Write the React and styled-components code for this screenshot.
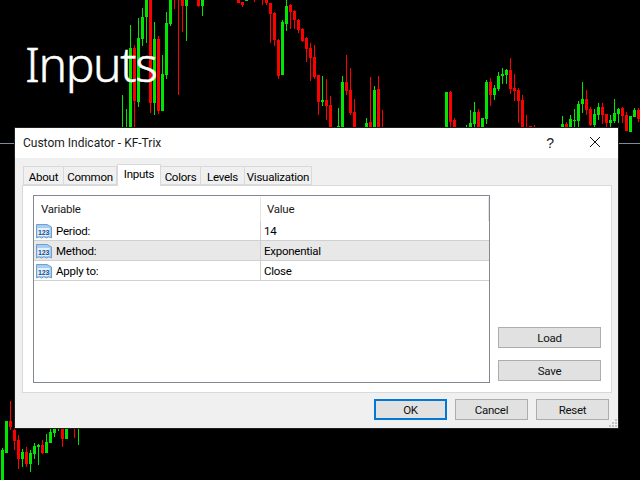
import React from "react";
import styled, { createGlobalStyle } from "styled-components";

const Global = createGlobalStyle`
  html, body { margin: 0; padding: 0; background: #000; }
  #root { width: 640px; height: 480px; }
`;

const G = "#00e600";
const R = "#ff0000";
// candles in tripled pixels: [x, wickTop, wickBottom, bodyTop, bodyBottom, colour]; no body when bodyTop is null
const top = [
  [367,285,382,null,null,G],[379,328,382,null,null,G],[391,75,382,145,382,G],[403,135,382,145,305,R],
  [415,55,322,115,308,G],[427,25,137,52,118,G],[439,0,130,0,50,G],[451,0,338,0,308,R],[463,67,345,118,310,G],
  [475,108,342,118,335,R],[487,165,333,222,333,G],[499,37,237,70,225,G],[511,0,78,0,72,G],[523,0,27,null,null,R],
  [535,0,285,null,null,R],[547,0,97,0,18,R],[559,0,122,0,18,G],[595,0,20,0,18,R],[607,0,48,0,18,G],
  [715,0,10,0,10,R],[727,5,20,5,14,R],[739,0,3,0,3,G],[763,0,6,null,null,R],[787,0,14,null,null,R],[799,0,14,0,10,R],
  [811,8,130,8,42,R],[823,35,137,38,120,R],[835,118,237,120,228,R],[847,60,225,67,225,G],[859,0,93,18,72,G],
  [871,12,87,15,35,R],[883,30,88,32,60,R],[895,58,100,60,90,R],[907,85,125,87,122,R],[919,112,185,115,147,R],
  [931,130,242,143,173,R],[943,135,237,170,230,R],[955,225,345,225,305,R],
  [967,228,318,300,306,G],[979,237,360,300,318,R],[991,288,382,315,382,R],[1015,323,382,378,382,G],
  [1027,228,382,246,382,G],[1039,165,285,246,273,R],[1051,205,345,270,338,R],[1063,297,382,336,382,R],
  [1099,354,382,369,382,G],[1111,231,382,366,382,R],[1123,258,382,270,382,G],[1135,228,382,267,382,R],[1147,330,382,null,null,R],
  [1339,276,382,276,382,G],[1351,273,382,276,366,R],[1363,354,382,360,382,R],[1399,375,382,null,null,G],
  [1411,330,382,369,382,G],[1423,306,382,336,372,G],[1435,327,382,336,382,R],[1447,354,382,354,382,G],
  [1459,240,372,246,357,G],[1471,234,318,246,285,R],[1483,255,300,264,285,G],[1495,216,273,228,267,G],
  [1507,204,252,222,228,G],[1519,207,252,210,225,G],[1531,174,282,210,267,R],[1543,222,303,264,273,R],
  [1555,264,370,270,303,R],[1567,285,382,300,382,R],[1579,345,382,null,null,R],[1591,378,382,378,382,R],[1603,375,382,null,null,R],
  [1687,348,382,372,382,G],[1699,366,382,372,382,R],[1711,345,382,357,382,G],[1723,327,382,360,363,G],
  [1735,303,382,312,363,G],[1747,246,340,297,312,G],[1759,270,345,297,330,R],[1771,321,378,327,375,R],
  [1783,327,382,342,375,G],[1795,309,360,321,345,G],[1807,309,372,321,345,R],[1819,342,382,342,369,R],
  [1831,345,382,360,369,G],[1843,297,369,339,363,G],[1855,324,369,327,342,G],[1867,321,369,324,348,R],
  [1879,336,393,345,393,R],[1891,348,396,348,396,G],[1903,324,351,330,351,G],[1915,324,366,330,357,R],
];
const low = [
  [7,234,330,240,330,G],[19,153,248,153,248,G],[31,93,180,153,170,R],[43,168,240,180,213,R],[55,195,297,210,267,R],
  [67,237,291,246,267,G],[79,231,291,246,282,R],[91,240,306,249,282,G],[103,219,267,228,252,G],[115,222,285,225,231,G],
  [127,210,252,225,249,R],[139,192,249,216,249,G],[151,176,219,186,219,G],[163,176,201,176,189,G],[175,176,183,null,null,G],
  [187,176,231,176,207,R],[199,176,207,176,207,G],[223,176,204,null,null,R],[235,176,225,null,null,G],
];

const Screen = styled.div`
  position: relative;
  width: 640px;
  height: 480px;
  overflow: hidden;
  background: #000;
  font-family: "Roboto", "Liberation Sans", sans-serif;
`;
const Chart = styled.svg`
  position: absolute;
  inset: 0;
`;
const Caption = styled.div`
  position: absolute;
  left: 25px;
  top: 32px;
  color: #fff;
  font: 300 48px/64px "Noto Sans", sans-serif;
  letter-spacing: -1.4px;
  -webkit-text-stroke: 0.5px #fff;
`;
const Dialog = styled.div`
  position: absolute;
  left: 14px;
  top: 127px;
  width: 603px;
  height: 300px;
  display: flex;
  flex-direction: column;
  background: #f0f0f0;
  border: 1px solid #1f1f1f;
  color: #000;
  font-size: 11.5px;
  letter-spacing: -0.25px;
`;
const TitleBar = styled.div`
  height: 30px;
  flex: none;
  display: flex;
  align-items: center;
  background: #fff;
  padding: 0 0 0 8px;
`;
const Title = styled.div`
  flex: 1;
  font-size: 12px;
  letter-spacing: 0;
  color: #1a1a1a;
`;
const HelpMark = styled.div`
  width: 46px;
  text-align: center;
  margin-right: -1px;
  font: 14px/29px "Liberation Sans", sans-serif;
  color: #222;
`;
const CloseMark = styled.svg`
  width: 46px;
  height: 30px;
  flex: none;
`;
const Body = styled.div`
  flex: 1;
  min-height: 0;
  padding: 8px 6px 0 7px;
  display: flex;
  flex-direction: column;
`;
const TabStrip = styled.div`
  display: flex;
  align-items: flex-end;
  height: 19px;
  padding-left: 1px;
  position: relative;
  z-index: 1;
`;
const Tab = styled.div`
  width: ${(p) => p.$w}px;
  box-sizing: border-box;
  height: ${(p) => (p.$active ? 22 : 19)}px;
  margin-bottom: ${(p) => (p.$active ? -1 : 0)}px;
  border: 1px solid #d9d9d9;
  border-left-width: ${(p) => (p.$active || p.$first ? 1 : 0)}px;
  border-bottom: ${(p) => (p.$active ? "none" : "1px solid #d9d9d9")};
  background: ${(p) => (p.$active ? "#fff" : "#f0f0f0")};
  text-align: center;
  line-height: ${(p) => (p.$active ? 19 : 20)}px;
  white-space: nowrap;
`;
const Panel = styled.div`
  box-sizing: border-box;
  height: 208px;
  border: 1px solid #d9d9d9;
  background: #fff;
  padding: 9px 10px 9px 10px;
  display: flex;
  gap: 8px;
`;
const Table = styled.div`
  box-sizing: border-box;
  width: 457px;
  height: 188px;
  border: 1px solid #828790;
  flex: none;
`;
const HeaderRow = styled.div`
  display: flex;
  height: 25px;
  color: #1a1a1a;
`;
const HeaderCell = styled.div`
  box-sizing: border-box;
  width: ${(p) => p.$w}px;
  height: 24px;
  margin-top: 1px;
  line-height: 25px;
  padding-left: ${(p) => p.$pad}px;
  border-right: 1px solid #e5e5e5;
`;
const Row = styled.div`
  display: flex;
  box-sizing: border-box;
  height: 20px;
  width: 455px;
  border-bottom: 1px solid #d0d0d0;
  background: ${(p) => (p.$selected ? "#e8e8e8" : "#fff")};
  line-height: 20px;
`;
const NameCell = styled.div`
  box-sizing: border-box;
  width: 227px;
  display: flex;
  align-items: center;
  gap: 4px;
  padding-left: 2px;
  border-right: 1px solid #d0d0d0;
`;
const ValueCell = styled.div`
  padding-left: 3px;
`;
const SideButtons = styled.div`
  display: flex;
  flex-direction: column;
  justify-content: flex-end;
  gap: 12px;
  padding-bottom: 2px;
`;
const Button = styled.div`
  box-sizing: border-box;
  width: ${(p) => p.$w || 73}px;
  height: 21px;
  background: #e1e1e1;
  border: ${(p) => (p.$primary ? "2px solid #0078d7" : "1px solid #adadad")};
  text-align: center;
  line-height: ${(p) => (p.$primary ? 19 : 21)}px;
  color: #111;
`;
const Footer = styled.div`
  flex: 1;
  display: flex;
  justify-content: flex-end;
  gap: 8px;
  padding: 6px 3px 0 0;
`;
const Grip = styled.svg`
  position: absolute;
  right: 0;
  bottom: 0;
`;
const IconDigits = styled.text`
  font: 700 7px "Liberation Sans", sans-serif;
  letter-spacing: -0.2px;
  fill: #174f8c;
`;

function Candles({ data, dx = 0, dy = 0 }) {
  return data.map(([x, wt, wb, bt, bb, c], i) => {
    const cx = Math.floor(x / 3) + dx;
    const yt = Math.round(wt / 3) + dy;
    const yb = Math.round(wb / 3) + dy;
    return (
      <g key={i} fill={c}>
        <rect x={cx} y={yt} width="1" height={yb - yt} />
        {bt !== null && (
          <rect x={cx - 1} y={Math.round(bt / 3) + dy} width="3" height={Math.max(1, Math.round((bb - bt) / 3))} />
        )}
      </g>
    );
  });
}

const NumIcon = () => (
  <svg width="16" height="16" viewBox="0 0 16 16">
    <path d="M0.5 1.5H11L15.5 4V15L13 13.8L10.5 15L8 13.8L5.5 15L3 13.8L0.5 15Z" fill="#a9cdee" stroke="#6f9fce" />
    <rect x="1.5" y="5" width="12" height="8" fill="#e4f0fb" />
    <IconDigits x="2" y="11.5">123</IconDigits>
  </svg>
);

const rows = [
  ["Period:", "14"],
  ["Method:", "Exponential", true],
  ["Apply to:", "Close"],
];
const tabs = [["About", 41], ["Common", 53], ["Inputs", 44], ["Colors", 40], ["Levels", 44], ["Visualization", 67]];

export default function App() {
  return (
    <Screen>
      <Global />
      <Chart width="640" height="480" viewBox="0 0 640 480">
        <rect x="0" y="143" width="640" height="1" fill="#7f8a9a" />
        <Candles data={top} />
        <Candles data={low} dy={370} />
      </Chart>
      <Caption>Inputs</Caption>
      <Dialog>
        <TitleBar>
          <Title>Custom Indicator - KF-Trix</Title>
          <HelpMark>?</HelpMark>
          <CloseMark viewBox="0 0 46 30">
            <path d="M18 9L28 19M28 9L18 19" stroke="#111" strokeWidth="1" fill="none" />
          </CloseMark>
        </TitleBar>
        <Body>
          <TabStrip>
            {tabs.map(([t, w], i) => (
              <Tab key={t} $w={w} $first={i === 0} $active={t === "Inputs"}>{t}</Tab>
            ))}
          </TabStrip>
          <Panel>
            <Table>
              <HeaderRow>
                <HeaderCell $w={227} $pad={7}>Variable</HeaderCell>
                <HeaderCell $w={228} $pad={6}>Value</HeaderCell>
              </HeaderRow>
              {rows.map(([n, v, s]) => (
                <Row key={n} $selected={s}>
                  <NameCell><NumIcon />{n}</NameCell>
                  <ValueCell>{v}</ValueCell>
                </Row>
              ))}
            </Table>
            <SideButtons>
              <Button $w={103}>Load</Button>
              <Button $w={103}>Save</Button>
            </SideButtons>
          </Panel>
          <Footer>
            <Button $primary>OK</Button>
            <Button>Cancel</Button>
            <Button>Reset</Button>
          </Footer>
        </Body>
        <Grip width="10" height="10" viewBox="0 0 10 10">
          <path d="M7 1h2v2H7zM4 4h2v2H4zM7 4h2v2H7zM1 7h2v2H1zM4 7h2v2H4zM7 7h2v2H7z" fill="#c4c4c4" />
        </Grip>
      </Dialog>
    </Screen>
  );
}
